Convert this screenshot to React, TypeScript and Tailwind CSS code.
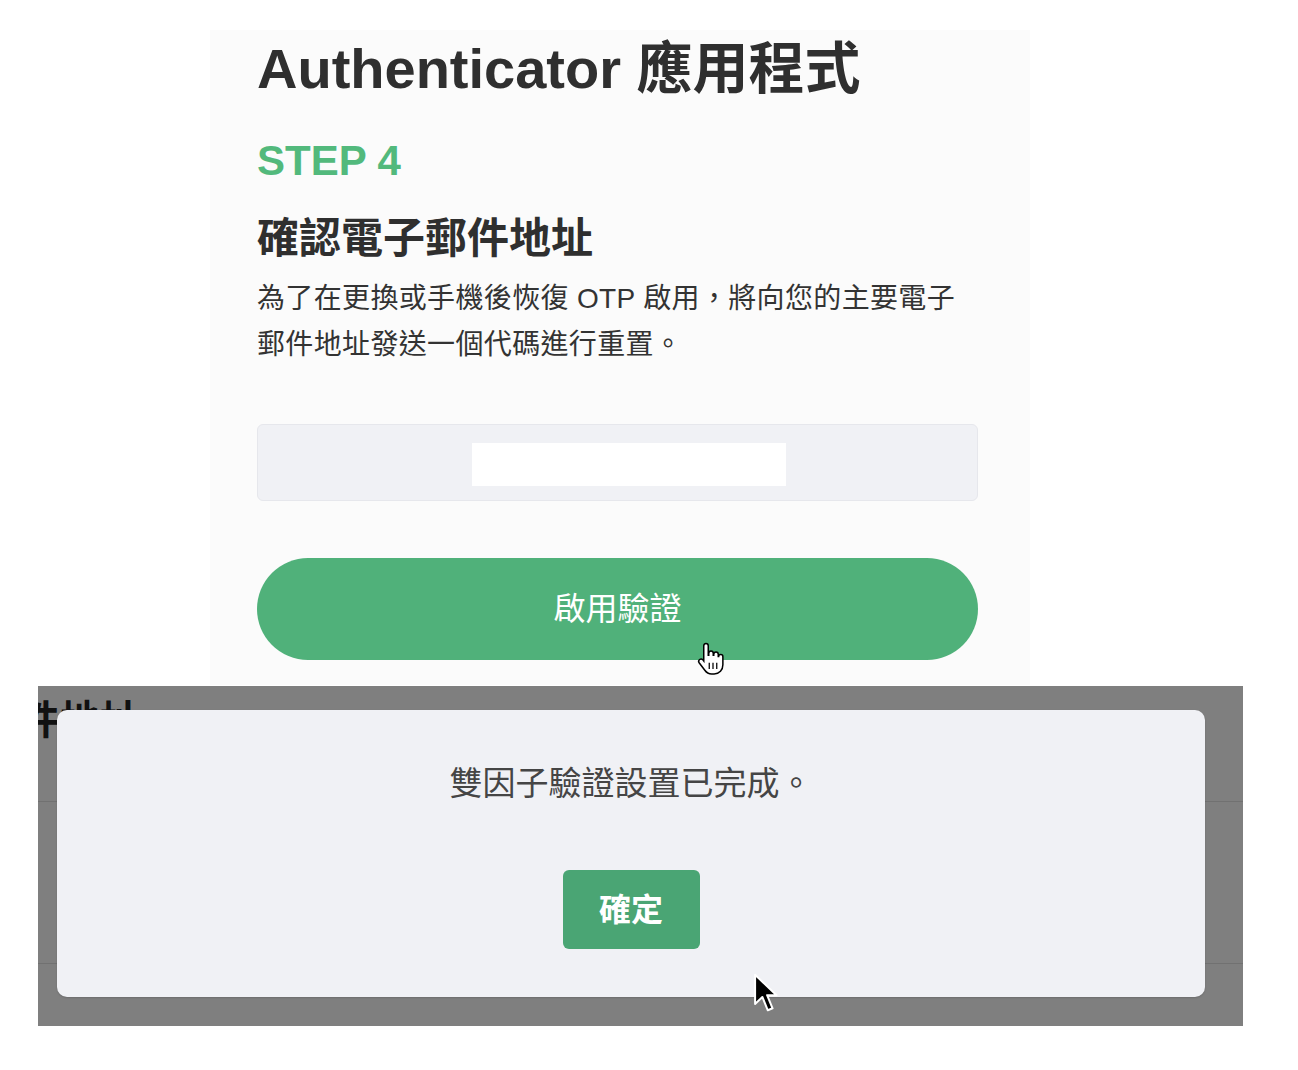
const HandCursor = () => (
	<svg width="30" height="36" viewBox="0 0 24 28" className="absolute left-[486px] top-[611px]">
		<path
			d="M8 1.5c1 0 1.8.8 1.8 1.8V11h.4V9.3c0-1 .8-1.8 1.8-1.8s1.8.8 1.8 1.8V11h.4v-.9c0-1 .8-1.8 1.8-1.8s1.8.8 1.8 1.8V12h.3c0-1 .8-1.6 1.7-1.6.9 0 1.7.7 1.7 1.7v6.5c0 4.2-2.8 7.4-7 7.4h-2c-2.6 0-4.2-1.2-5.6-3.2L2.5 17c-.6-.9-.4-2 .4-2.6.8-.6 1.9-.5 2.6.3l.7.9V3.3C6.2 2.3 7 1.5 8 1.5z"
			fill="#fff"
			stroke="#000"
			strokeWidth="1.2"
		/>
		<path d="M10.6 17v5M13.6 17v5M16.6 17v5" stroke="#000" strokeWidth="1" />
	</svg>
);

const ArrowCursor = () => (
	<svg width="26" height="40" viewBox="0 0 14 22" className="absolute left-[715px] top-[287px]">
		<path d="M1 1L1 17L5 13.2L8 20.5L10.6 19.4L7.6 12.2L12.8 12.2Z" fill="#000" stroke="#fff" strokeWidth="1.1" strokeLinejoin="round" />
	</svg>
);

export default function App() {
	return (
		<div className="min-h-[1070px] w-full bg-white pt-[30px] font-['Liberation_Sans','Noto_Sans_CJK_TC',sans-serif]">
			{/* step card */}
			<div className="relative ml-[210px] flex w-[820px] flex-col bg-[#fbfbfb] pb-[25px] pl-[47px] pr-[52px] pt-[9px]">
				<h1 className="text-[56px] font-bold leading-[60px] text-[#2f2f2f]">Authenticator 應用程式</h1>
				<p className="mt-[40px] text-[42px] font-bold leading-[44px] text-[#52b97c]">STEP 4</p>
				<h2 className="mt-[33px] text-[42px] font-bold leading-[46px] text-[#2f2f2f]">確認電子郵件地址</h2>
				<p className="mt-[14px] text-[28px] leading-[46px] tracking-[0.35px] text-[#333]">
					為了在更換或手機後恢復 OTP 啟用，將向您的主要電子
					<br />
					郵件地址發送一個代碼進行重置。
				</p>
				<div className="mt-[56px] flex h-[77px] items-center justify-center rounded-[6px] border border-[#e6e7ec] bg-[#f0f1f5] pl-[23px] pt-[4px]">
					<div className="h-[43px] w-[314px] bg-white" />
				</div>
				<button className="mt-[57px] h-[102px] w-full rounded-full bg-[#50b17a] text-[32px] leading-none text-white">
					啟用驗證
				</button>
				<HandCursor />
			</div>

			{/* completed dialog over dimmed page */}
			<div className="relative ml-[38px] mt-px h-[340px] w-[1205px] overflow-hidden bg-white">
				<div className="ml-[-58px] mt-[12px] flex items-start">
					<span className="text-[40px] font-bold leading-[44px] text-[#222]">郵件地址</span>
				</div>
				<div className="mt-[59px] h-px w-full bg-[#e2e2e2]" />
				<div className="mt-[161px] h-px w-full bg-[#e2e2e2]" />

				<div className="absolute inset-0 bg-black/50 pl-[19px] pr-[38px] pt-[24px]">
					<div className="flex h-[287px] flex-col items-center rounded-[10px] bg-[#f0f1f5] pt-[54px] shadow-[0_1px_2px_rgba(0,0,0,0.15)]">
						<p className="text-[33px] leading-[40px] text-[#454545]">雙因子驗證設置已完成。</p>
						<button className="mt-[66px] h-[79px] w-[137px] rounded-[6px] bg-[#4aa574] text-[32px] font-bold text-white">
							確定
						</button>
					</div>
				</div>
				<ArrowCursor />
			</div>
		</div>
	);
}
